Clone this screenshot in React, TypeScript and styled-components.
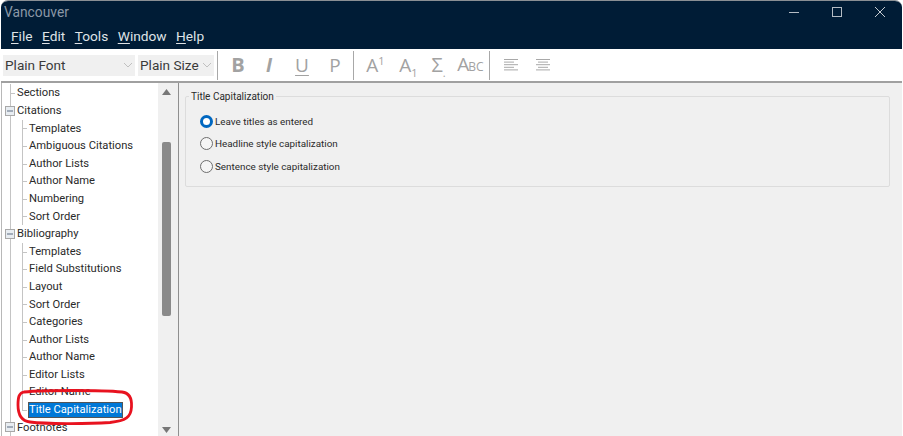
import React from "react";
import styled, { createGlobalStyle } from "styled-components";

const Global = createGlobalStyle`
  html, body { margin: 0; padding: 0; background: #fff; overflow: hidden; }
  body { font-family: Roboto, "Open Sans", "Liberation Sans", sans-serif; }
`;

const Page = styled.div`
  position: relative;
  width: 903px;
  height: 436px;
  overflow: hidden;
  background: #fff;
`;
const Win = styled.div`
  width: 901px;
  height: 436px;
  margin-left: 1px;
  display: flex;
  flex-direction: column;
  border-radius: 7px 7px 0 0;
  overflow: hidden;
  border-top: 1px solid #8a8f94;
  box-sizing: border-box;
`;
const TitleBar = styled.div`
  height: 48px;
  flex: none;
  background: #001c36;
  display: flex;
  flex-direction: column;
  position: relative;
`;
const WinTitle = styled.div`
  height: 23px;
  padding-left: 3px;
  font-size: 13.8px;
  line-height: 23px;
  color: #8b98a6;
`;
const Menu = styled.div`
  display: flex;
  gap: 9.5px;
  padding-left: 10px;
  font-size: 13.7px;
  line-height: 24px;
  color: #dfe3e7;
  u { text-underline-offset: 2px; text-decoration-thickness: 1px; }
`;
const Controls = styled.svg`
  position: absolute;
  right: 0;
  top: 0;
`;
const Toolbar = styled.div`
  height: 32px;
  flex: none;
  background: #fff;
  display: flex;
  align-items: center;
  border-bottom: 2px solid #a0a0a0;
  box-sizing: content-box;
`;
const Combo = styled.div<{ $w: number; $ml: number }>`
  width: ${(p) => p.$w}px;
  margin-left: ${(p) => p.$ml}px;
  height: 21px;
  background: #f0f0f0;
  display: flex;
  align-items: center;
  justify-content: space-between;
  padding: 0 2px;
  box-sizing: border-box;
  font-size: 13.6px;
  white-space: nowrap;
  color: #3a3a3a;
`;
const Sep = styled.div<{ $ml: number }>`
  width: 1px;
  height: 29px;
  background: #a8a8a8;
  margin-left: ${(p) => p.$ml}px;
  flex: none;
`;
const Tool = styled.span<{ $w: number; $size?: number; $b?: boolean; $i?: boolean; $u?: boolean }>`
  width: ${(p) => p.$w}px;
  flex: none;
  text-align: center;
  font-family: "Open Sans", sans-serif;
  font-size: ${(p) => p.$size ?? 19}px;
  line-height: 24px;
  color: #a2a2a2;
  font-weight: ${(p) => (p.$b ? 700 : 400)};
  font-style: ${(p) => (p.$i ? "italic" : "normal")};
  text-decoration: ${(p) => (p.$u ? "underline" : "none")};
  text-underline-offset: 3px;
  white-space: nowrap;
  sup, sub { font-size: 11px; line-height: 0; }
  small { font-size: 12px; margin-left: -1px; }
`;
const ToolIcon = styled.div<{ $w: number }>`
  width: ${(p) => p.$w}px;
  flex: none;
  display: flex;
  justify-content: center;
`;
const Body = styled.div`
  flex: 1;
  display: flex;
  min-height: 0;
`;
const TreePane = styled.div`
  width: 174px;
  flex: none;
  display: flex;
  background: #fff;
  box-sizing: border-box;
  border-left: 1px solid #b8b8b8;
`;
const Tree = styled.div`
  width: 156px;
  flex: none;
  overflow: hidden;
  padding-top: 1.4px;
`;
const Row = styled.div`
  height: 17.6px;
  display: flex;
  align-items: stretch;
  padding-left: 1px;
  font-size: 11.2px;
  line-height: 17.6px;
  color: #2a2a2a;
  white-space: nowrap;
`;
const Guide = styled.span<{ $line?: boolean; $tick?: boolean; $half?: boolean }>`
  width: 12px;
  flex: none;
  position: relative;
  display: flex;
  align-items: center;
  justify-content: center;
  &::before {
    content: "";
    position: absolute;
    left: 7px;
    top: 0;
    width: 1px;
    height: ${(p) => (p.$half ? "50%" : "100%")};
    background: ${(p) => (p.$line ? "#c4c4c4" : "transparent")};
  }
  &::after {
    content: "";
    position: absolute;
    left: 7px;
    top: 50%;
    width: 5px;
    height: 1px;
    background: ${(p) => (p.$tick ? "#c4c4c4" : "transparent")};
  }
`;
const Expander = styled.svg`
  position: relative;
  z-index: 1;
  margin-left: 2px;
`;
const Label = styled.span<{ $sel?: boolean }>`
  margin-left: 1px;
  padding: 0 1px;
  height: 16px;
  line-height: 15px;
  margin-top: 1px;
  box-sizing: border-box;
  background: ${(p) => (p.$sel ? "#0078d7" : "transparent")};
  color: ${(p) => (p.$sel ? "#fff" : "inherit")};
  outline: ${(p) => (p.$sel ? "1px solid #555" : "none")};
  outline-offset: -1px;
`;
const Scroll = styled.div`
  width: 17px;
  flex: none;
  background: #f0f0f0;
  display: flex;
  flex-direction: column;
  align-items: center;
  justify-content: space-between;
  padding-top: 6px;
  padding-bottom: 3px;
  box-sizing: border-box;
`;
const Thumb = styled.div`
  width: 9px;
  height: 174px;
  margin-bottom: 64px;
  border-radius: 2px;
  background: #8a8a8a;
`;
const Splitter = styled.div`
  width: 3px;
  flex: none;
  background: #f0f0f0;
`;
const Right = styled.div`
  flex: 1;
  background: #f0f0f0;
  border-left: 1px solid #8f8f8f;
  padding: 5px 12px 0 6px;
  box-sizing: border-box;
`;
const Group = styled.fieldset`
  margin: 0;
  padding: 6px 0 0 0;
  height: 99px;
  box-sizing: border-box;
  border: 1px solid #dcdcdc;
  border-radius: 2px;
  legend {
    margin-left: 3px;
    padding: 2px 2px 0;
    font-size: 10px;
    line-height: 14px;
    color: #2a2a2a;
  }
`;
const RadioRow = styled.div`
  height: 22.6px;
  display: flex;
  align-items: center;
  gap: 2px;
  padding-left: 14px;
  font-size: 9.85px;
  color: #2a2a2a;
  white-space: nowrap;
`;
const Radio = styled.span<{ $on?: boolean }>`
  width: 13px;
  height: 13px;
  border-radius: 50%;
  flex: none;
  box-sizing: border-box;
  background: ${(p) => (p.$on ? "#fff" : "#f5f5f5")};
  border: ${(p) => (p.$on ? "3.5px solid #0067c0" : "1px solid #6e6e6e")};
`;
const Mark = styled.svg`
  position: absolute;
  left: 16px;
  top: 389px;
  pointer-events: none;
`;

const Minus = () => (
  <Expander width="10" height="10" viewBox="0 0 10 10">
    <rect x="0.5" y="0.5" width="9" height="9" fill="#e8edf2" stroke="#a8a8a8" />
    <path d="M2 5H8" stroke="#5a6a80" />
  </Expander>
);
const Chevron = () => (
  <svg width="10" height="6" viewBox="0 0 10 6">
    <path d="M1 1l4 4 4-4" fill="none" stroke="#c0c0c0" />
  </svg>
);
const Lines = ({ spans }: { spans: [number, number][] }) => (
  <svg width="16" height="14" viewBox="0 0 16 14">
    {spans.map(([a, b], i) => (
      <path key={i} d={`M${a} ${1.5 + i * 2.6}H${b}`} stroke="#a8a8a8" />
    ))}
  </svg>
);

type Item = { t: string; k: "top" | "head" | "leaf" | "last" };
const items: Item[] = [
  { t: "Sections", k: "top" },
  { t: "Citations", k: "head" },
  ...["Templates", "Ambiguous Citations", "Author Lists", "Author Name", "Numbering", "Sort Order"].map(
    (t) => ({ t, k: "leaf" as const })
  ),
  { t: "Bibliography", k: "head" },
  ...["Templates", "Field Substitutions", "Layout", "Sort Order", "Categories", "Author Lists", "Author Name", "Editor Lists", "Editor Name"].map(
    (t) => ({ t, k: "leaf" as const })
  ),
  { t: "Title Capitalization", k: "last" },
  { t: "Footnotes", k: "head" },
];

export default function App() {
  return (
    <Page>
      <Global />
      <Win>
        <TitleBar>
          <WinTitle>Vancouver</WinTitle>
          <Menu>
            <span><u>F</u>ile</span>
            <span><u>E</u>dit</span>
            <span><u>T</u>ools</span>
            <span><u>W</u>indow</span>
            <span><u>H</u>elp</span>
          </Menu>
          <Controls width="120" height="24" viewBox="0 0 120 24">
            <path d="M7 11.5H17" stroke="#b5bcc4" strokeWidth="1" />
            <rect x="50.5" y="6.5" width="9" height="9" fill="none" stroke="#b5bcc4" />
            <path d="M93 6l10 10M103 6L93 16" stroke="#c5cbd1" fill="none" />
          </Controls>
        </TitleBar>
        <Toolbar>
          <Combo $w={132} $ml={2}>Plain Font<Chevron /></Combo>
          <Combo $w={76} $ml={3}>Plain Size<Chevron /></Combo>
          <Sep $ml={3} />
          <Tool $w={40} $b $size={20}>B</Tool>
          <Tool $w={22} $i $b>I</Tool>
          <Tool $w={44} $u>U</Tool>
          <Tool $w={22}>P</Tool>
          <Sep $ml={7} />
          <Tool $w={43}>A<sup>1</sup></Tool>
          <Tool $w={23}>A<sub>1</sub></Tool>
          <Tool $w={37} $size={20}>Σ<sub>.</sub></Tool>
          <Tool $w={27}>A<small>BC</small></Tool>
          <Sep $ml={5} />
          <ToolIcon $w={41}>
            <Lines spans={[[1, 15], [1, 11], [1, 15], [1, 11], [1, 15]]} />
          </ToolIcon>
          <ToolIcon $w={24}>
            <Lines spans={[[1, 15], [3, 13], [1, 15], [3, 13], [1, 15]]} />
          </ToolIcon>
        </Toolbar>
        <Body>
          <TreePane>
            <Tree>
              {items.map((it, i) => (
                <Row key={i}>
                  {it.k === "top" && <Guide $line $tick />}
                  {it.k === "head" && <Guide $line><Minus /></Guide>}
                  {it.k === "leaf" && (<><Guide $line /><Guide $line $tick /></>)}
                  {it.k === "last" && (<><Guide $line /><Guide $line $half $tick /></>)}
                  <Label $sel={it.k === "last"}>{it.t}</Label>
                </Row>
              ))}
            </Tree>
            <Scroll>
              <svg width="9" height="6" viewBox="0 0 9 6"><path d="M4.5 0L9 6H0z" fill="#777" /></svg>
              <Thumb />
              <svg width="9" height="6" viewBox="0 0 9 6"><path d="M0 0H9L4.5 6z" fill="#777" /></svg>
            </Scroll>
          </TreePane>
          <Splitter />
          <Right>
            <Group>
              <legend>Title Capitalization</legend>
              <RadioRow><Radio $on />Leave titles as entered</RadioRow>
              <RadioRow><Radio />Headline style capitalization</RadioRow>
              <RadioRow><Radio />Sentence style capitalization</RadioRow>
            </Group>
          </Right>
        </Body>
      </Win>
      <Mark width="120" height="38" viewBox="0 0 120 38">
        <path
          d="M8 3C28 1 85 1 106 3C114 4 116 10 115.5 18C115 28 110 32 94 33.5C70 35 30 35 14 33C5 32 2 26 2 16C2 8 3 4 8 3Z"
          fill="none"
          stroke="#e8121f"
          strokeWidth="2.8"
        />
      </Mark>
    </Page>
  );
}
